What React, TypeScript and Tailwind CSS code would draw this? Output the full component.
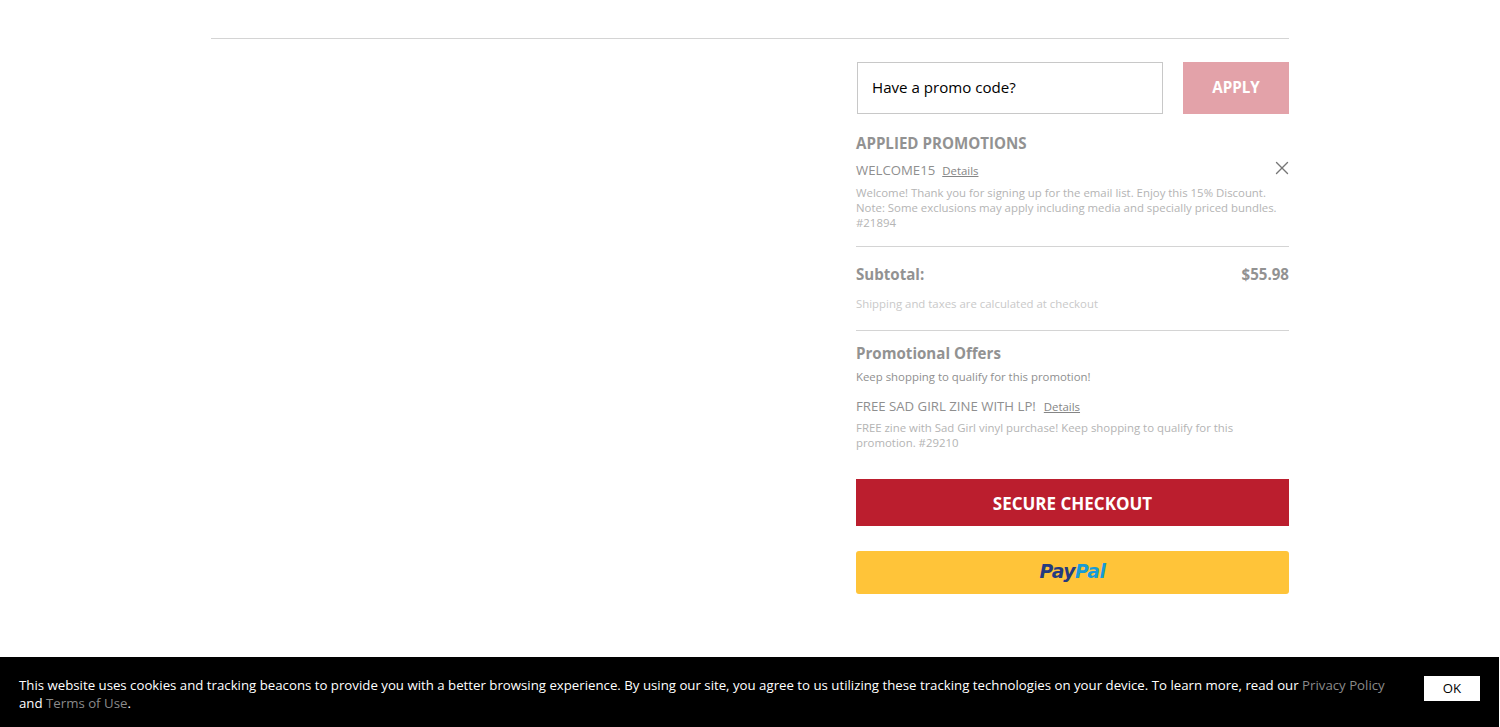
import { X } from 'lucide-react'

const font = { fontFamily: '"Open Sans", sans-serif' }

export default function App() {
  return (
    <div className="h-[727px] overflow-hidden bg-white relative" style={font}>
      <div className="mx-[211px] w-[1078px] pt-[38px]">
        <div className="border-t border-[#d4d4d4]" />
        <div className="ml-[645px] w-[433px] pt-[23px]">
          {/* Promo code */}
          <div className="flex gap-5 pl-px">
            <div className="w-[306px] h-[52px] border border-[#c8c8c8] flex items-center pl-[14px] pb-[2px] text-[15.1px] text-black">
              Have a promo code?
            </div>
            <button className="w-[106px] h-[52px] pb-[2px] bg-[#e3a2a9] text-white text-[15.2px] font-bold">APPLY</button>
          </div>

          {/* Applied promotions */}
          <h3 className="mt-[17px] text-[15.1px] leading-[24px] font-bold text-[#929292]">APPLIED PROMOTIONS</h3>
          <div className="relative">
            <div className="mt-[6px] flex items-baseline gap-[7px] leading-[18px]">
              <span className="text-[13.2px] text-[#8f8f8f]">WELCOME15</span>
              <a className="text-[11.4px] underline text-[#858585]">Details</a>
            </div>
            <X className="absolute right-[-4px] top-[-4px] w-[22px] h-[22px] text-[#767676]" strokeWidth={1.5} />
            <p className="mt-[5px] text-[11.4px] leading-[15px] text-[#b4b4b4]">
              Welcome! Thank you for signing up for the email list. Enjoy this 15% Discount.
              <br />
              Note: Some exclusions may apply including media and specially priced bundles.
              <br />
              #21894
            </p>
          </div>

          <div className="mt-[16px] border-t border-[#d4d4d4]" />

          {/* Subtotal */}
          <div className="mt-[15px] flex justify-between text-[15.1px] leading-[24px] font-bold text-[#929292]">
            <span>Subtotal:</span>
            <span>$55.98</span>
          </div>
          <p className="mt-[10px] text-[11.4px] leading-[15px] text-[#c9c9c9]">Shipping and taxes are calculated at checkout</p>

          <div className="mt-[19px] border-t border-[#d4d4d4]" />

          {/* Promotional offers */}
          <h3 className="mt-[10px] text-[15.1px] leading-[24px] font-bold text-[#929292]">Promotional Offers</h3>
          <p className="mt-[4px] text-[11.4px] leading-[16px] text-[#8f8f8f]">Keep shopping to qualify for this promotion!</p>
          <div className="mt-[12px] flex items-baseline gap-[8px] leading-[18px]">
            <span className="text-[13.2px] text-[#8f8f8f]">FREE SAD GIRL ZINE WITH LP!</span>
            <a className="text-[11.4px] underline text-[#858585]">Details</a>
          </div>
          <p className="mt-[4px] text-[11.4px] leading-[15px] text-[#b4b4b4]">
            FREE zine with Sad Girl vinyl purchase! Keep shopping to qualify for this
            <br />
            promotion. #29210
          </p>

          {/* Checkout buttons */}
          <button className="mt-[29px] w-full h-[47px] bg-[#bb1e2e] pt-[3px] text-white text-[17px] font-bold">SECURE CHECKOUT</button>
          <button className="mt-[25px] w-full h-[43px] rounded-[3px] bg-[#ffc439] flex items-center justify-center">
            <span className="text-[18.7px] font-bold italic tracking-[-0.4px] text-[#253b80] [font-family:'DejaVu_Sans',sans-serif]">
              Pay<span className="text-[#179bd7]">Pal</span>
            </span>
          </button>
        </div>
      </div>

      {/* Cookie bar */}
      <div className="absolute left-0 bottom-0 w-[1499px] h-[70px] bg-black flex items-start pl-[19px] pr-[19px] pt-[19px]">
        <p className="w-[1381px] shrink-0 text-[13.24px] leading-[18px] text-white">
          This website uses cookies and tracking beacons to provide you with a better browsing experience. By using our site, you agree to us utilizing these tracking technologies on your device. To learn more, read our{' '}
          <a className="text-[#8a8a8a]">Privacy Policy</a> and <a className="text-[#8a8a8a]">Terms of Use</a>.
        </p>
        <button className="ml-[24px] w-[56px] h-[25px] bg-white text-[13.2px] text-black">OK</button>
      </div>
    </div>
  )
}
